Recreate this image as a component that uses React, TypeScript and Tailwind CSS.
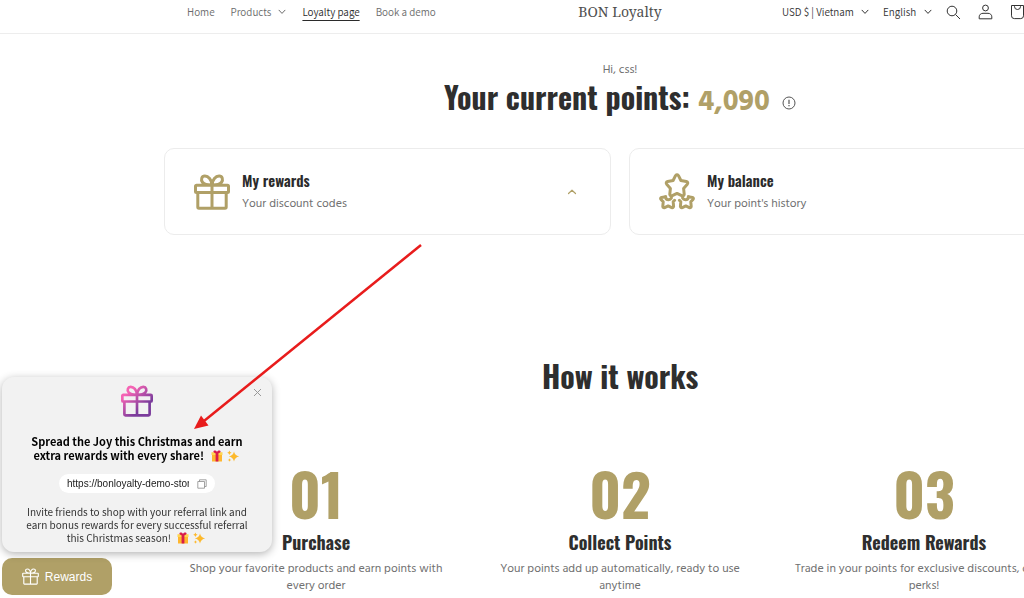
import React, { useState } from "react";

const steps = [
  {
    number: "01",
    title: "Purchase",
    text: "Shop your favorite products and earn points with every order",
  },
  {
    number: "02",
    title: "Collect Points",
    text: "Your points add up automatically, ready to use anytime",
  },
  {
    number: "03",
    title: "Redeem Rewards",
    text: "Trade in your points for exclusive discounts, or VIP perks!",
  },
];

const ChevronDown: React.FC<{ className?: string }> = ({ className }) => (
  <svg viewBox="0 0 8 6" className={`h-[6px] w-2 ${className ?? ""}`} fill="none" stroke="currentColor" aria-hidden="true">
    <path d="M1 1.2 4 4.4 7 1.2" strokeLinecap="round" strokeLinejoin="round" />
  </svg>
);

const GiftIcon: React.FC<{ className: string; stroke?: string; width?: number }> = ({
  className,
  stroke = "currentColor",
  width = 2,
}) => (
  <svg viewBox="0 0 36 36" className={className} fill="none" stroke={stroke} strokeWidth={width} aria-hidden="true">
    <defs>
      <linearGradient id="gift" x1="4" y1="4" x2="30" y2="34" gradientUnits="userSpaceOnUse">
        <stop offset="0.15" stopColor="#f564b4" />
        <stop offset="0.75" stopColor="#7b3c9c" />
      </linearGradient>
    </defs>
    <path
      d="M2.5 11.2h31a1 1 0 0 1 1 1v5.4a1 1 0 0 1-1 1h-31a1 1 0 0 1-1-1v-5.4a1 1 0 0 1 1-1ZM3.8 18.6V33a1.2 1.2 0 0 0 1.2 1.2h26a1.2 1.2 0 0 0 1.2-1.2V18.6M18 11.2v23M18 11C17.6 5.500 14.400 2 10.800 2.100 7.600 2.200 6.600 5.800 8.500 8.200c1.700 2.200 5.200 2.900 9.500 2.800ZM18 11C18.400 5.500 21.600 2 25.200 2.100c3.200.1 4.200 3.700 2.300 6.100-1.700 2.200-5.200 2.900-9.500 2.800Z"
      strokeLinejoin="round"
    />
  </svg>
);

const StarsIcon: React.FC = () => (
  <svg
    viewBox="0 0 36 37"
    className="h-[37px] w-9 shrink-0"
    fill="none"
    stroke="currentColor"
    strokeWidth="3"
    strokeLinejoin="round"
    strokeLinecap="round"
    aria-hidden="true"
  >
    <path d="M16.500 2.700q1.500-1.700 3 0l2.400 4.800 5.400 1q2.300.8 1 2.800l-3.700 4.100.6 5.800q-.3 2.100-2.500 1.500L18 20.400l-4.700 2.300q-2.200.6-2.500-1.500l.6-5.800-3.700-4.100q-1.300-2 1-2.800l5.400-1Z" />
    <path d="M6.600 23.800l-4 .6q-1.600.7-.6 2l2.200 2.400-.4 4.600q.2 1.800 1.900 1.200l3.500-1.700 3.500 1.700q1.700.5 1.900-1.200l-.4-4.600 1.400-1.500" />
    <path d="M6.600 23.800q.2 2.900 2.900 2.900 2-.2 2.900-1.800" />
    <path d="M29.400 23.800l4 .6q1.600.7.6 2l-2.200 2.400.4 4.600q-.2 1.800-1.900 1.200l-3.500-1.700-3.500 1.700q-1.700.5-1.900-1.200l.4-4.600-1.400-1.500" />
    <path d="M29.400 23.800q-.2 2.900-2.900 2.900-2-.2-2.900-1.800" />
  </svg>
);

const FestiveIcons: React.FC = () => (
  <svg viewBox="0 0 30 12" className="ml-1 inline-block h-3 w-[30px] align-[-2px]" role="img" aria-label="Gift and sparkles">
    <path fill="#ffb62e" d="M1 4h10v7.500H1z" />
    <path fill="#ffd54f" d="M.5 2.200h11V5H.5z" />
    <path fill="#d81b4a" d="M4.600 2.500h2.800v9H4.600zM6 3.300C4.500 3.500 2.300 3 2.400 1.600 2.600 0 5.200.3 6 2 6.800.3 9.400 0 9.600 1.600 9.700 3 7.500 3.500 6 3.300Z" />
    <path
      fill="#fdb92c"
      d="M23 1.500q.7 4.100 5.200 4.900-4.500.8-5.200 5.100-.7-4.300-5.200-5.100 4.500-.8 5.200-4.900ZM18.400.5q.3 1.800 2.200 2.200-1.900.4-2.200 2.200-.3-1.800-2.200-2.200 1.900-.4 2.200-2.200ZM18.500 8.300q.2 1.400 1.800 1.700-1.600.3-1.800 1.700-.2-1.400-1.800-1.700 1.600-.3 1.800-1.700Z"
    />
  </svg>
);

const HeaderSelect: React.FC<{ label: string; value: string }> = ({ label, value }) => (
  <label className="grid items-center text-[#333]">
    <span className="sr-only">{label}</span>
    <select className="col-start-1 row-start-1 appearance-none bg-transparent pr-[15px] leading-4 outline-none">
      <option>{value}</option>
    </select>
    <ChevronDown className="pointer-events-none col-start-1 row-start-1 justify-self-end" />
  </label>
);

const Header: React.FC = () => (
  <header className="grid h-[34px] grid-cols-[1fr_auto_1fr] items-center border-b border-[#ededed] px-[187px] pb-[9px] font-['Assistant','Noto_Sans_CJK_JP',sans-serif] text-[11px] leading-4">
    <nav className="flex items-center gap-4 text-[#6b6b6b]">
      <a href="#home">Home</a>
      <button className="flex items-center gap-[7px]">
        Products
        <ChevronDown />
      </button>
      <a href="#loyalty" className="text-[#2b2b2b] underline underline-offset-4">
        Loyalty page
      </a>
      <a href="#demo">Book a demo</a>
    </nav>
    <a href="#home" className="font-['Noto_Serif','DejaVu_Serif_Condensed','DejaVu_Serif',serif] text-sm text-[#505050]">
      BON Loyalty
    </a>
    <div className="mr-7 flex items-center justify-end gap-[14px] text-[#333]">
      <HeaderSelect label="Country" value="USD $ | Vietnam" />
      <HeaderSelect label="Language" value="English" />
      <div className="flex items-center gap-[17px]">
        <button aria-label="Search">
          <svg viewBox="0 0 15 15" className="size-[15px]" fill="none" stroke="currentColor">
            <circle cx="6" cy="6" r="4.800" />
            <path d="m9.500 9.500 4.500 4.500" />
          </svg>
        </button>
        <button aria-label="Account">
          <svg viewBox="0 0 15 16" className="h-4 w-[15px]" fill="none" stroke="currentColor">
            <circle cx="7.500" cy="4" r="2.900" />
            <path d="M1.200 14.800v-2C1.200 10.600 3 9.300 5 9.300h5c2 0 3.800 1.300 3.800 3.500v2Z" strokeLinejoin="round" />
          </svg>
        </button>
        <button aria-label="Cart">
          <svg viewBox="0 0 15 16" className="h-4 w-[15px]" fill="none" stroke="currentColor">
            <path d="M1.500 1.500h12v10.300a2.800 2.800 0 0 1-2.800 2.800H4.300a2.800 2.800 0 0 1-2.800-2.800ZM4.500 1.500v1a3 3 0 0 0 6 0v-1" />
          </svg>
        </button>
      </div>
    </div>
  </header>
);

type CardProps = { icon: React.ReactNode; title: string; text: string };

const AccountCard: React.FC<CardProps> = ({ icon, title, text }) => (
  <button className="flex h-[87px] items-center gap-3 rounded-[10px] border border-[#ececec] pr-[33px] pl-[29px] text-left text-[#b0a067]">
    {icon}
    <span className="flex flex-1 flex-col gap-1">
      <span className="font-['Oswald',sans-serif] text-[15px] leading-5 font-semibold text-[#2b2b2b]">{title}</span>
      <span className="text-xs leading-5 text-[#707070]">{text}</span>
    </span>
    <svg viewBox="0 0 10 6" className="h-[6px] w-[10px]" fill="none" stroke="currentColor" strokeWidth="1.200" aria-hidden="true">
      <path d="M1.500 4.500 5 1.200l3.500 3.300" strokeLinecap="round" strokeLinejoin="round" />
    </svg>
  </button>
);

const ReferralPopup: React.FC<{ onClose: () => void }> = ({ onClose }) => (
  <aside className="relative flex w-[270px] flex-col items-center rounded-xl bg-[#f2f2f2] px-5 pt-2 pb-2 text-center font-['Noto_Sans_CJK_JP',sans-serif] shadow-[0_2px_8px_rgba(0,0,0,0.3)]">
    <button onClick={onClose} aria-label="Close" className="absolute top-[11px] right-[10px]">
      <svg viewBox="0 0 9 9" className="size-[9px]" stroke="#999" fill="none">
        <path d="m1 1 7 7M8 1 1 8" />
      </svg>
    </button>
    <GiftIcon className="h-8 w-8" stroke="url(#gift)" width={3} />
    <h3 className="mt-[17px] text-[11px] leading-[14px] font-bold text-black">
      Spread the Joy this Christmas and earn
      <br />
      extra rewards with every share! <FestiveIcons />
    </h3>
    <div className="mt-3 flex h-[19px] w-[156px] items-center justify-between rounded-full bg-white px-2">
      <input
        readOnly
        aria-label="Referral link"
        value="https://bonloyalty-demo-store.com"
        className="w-[122px] bg-transparent font-['Liberation_Sans',sans-serif] text-[10px] text-[#222] outline-none"
      />
      <button aria-label="Copy link">
        <svg viewBox="0 0 10 10" className="size-[10px]" fill="none" stroke="#8c8c8c" strokeWidth="0.8">
          <path d="M.8 2.500h6.700v6.700H.8ZM2.500 2.500V.8h6.700v6.700H7.500" strokeLinejoin="round" />
        </svg>
      </button>
    </div>
    <p className="mt-3 text-[10px] leading-[13px] text-[#333]">
      Invite friends to shop with your referral link and
      <br />
      earn bonus rewards for every successful referral
      <br />
      this Christmas season! <FestiveIcons />
    </p>
  </aside>
);

const App: React.FC = () => {
  const [showPopup, setShowPopup] = useState<boolean>(true);

  return (
    <div className="relative h-screen overflow-hidden bg-white">
      <div className="min-w-[1240px] font-['Hind','Noto_Sans',sans-serif]">
        <Header />

        <main className="px-[164px] text-center">
          <p className="pt-[26px] text-xs leading-5 text-[#707070]">Hi, css!</p>
          <div className="flex h-9 items-baseline justify-center gap-2">
            <h1 className="font-['Oswald',sans-serif] text-[30px] leading-[34px] font-bold text-[#2e2e2e]">
              Your current points:
            </h1>
            <span className="text-[29px] leading-9 font-bold text-[#b0a067]">4,090</span>
            <button aria-label="About points" className="pl-1">
              <svg viewBox="0 0 14 14" className="size-[14px]" fill="none" stroke="#555">
                <circle cx="7" cy="7" r="6" />
                <path d="M7 3.700v4.400M7 9v1.300" strokeWidth="1.200" />
              </svg>
            </button>
          </div>

          <section className="mt-8 grid grid-cols-2 gap-[18px]">
            <AccountCard icon={<GiftIcon className="size-9 shrink-0" width={3} />} title="My rewards" text="Your discount codes" />
            <AccountCard icon={<StarsIcon />} title="My balance" text="Your point's history" />
          </section>

          <section className="pt-[121px]">
            <h2 className="font-['Oswald',sans-serif] text-[30px] leading-10 font-bold text-[#2e2e2e]">How it works</h2>
            <ol className="mt-[63px] grid grid-cols-3">
              {steps.map((step) => (
                <li key={step.number} className="px-3">
                  <div className="font-['Oswald',sans-serif] text-[58px] leading-[68px] font-bold text-[#b0a067]">
                    {step.number}
                  </div>
                  <h3 className="font-['Oswald',sans-serif] text-lg leading-[30px] font-bold text-[#2e2e2e]">{step.title}</h3>
                  <p className="mt-1 text-xs leading-[17px] text-[#707070]">{step.text}</p>
                </li>
              ))}
            </ol>
          </section>
        </main>
      </div>

      <div className="fixed bottom-[3px] left-[2px] flex flex-col items-start gap-[6px]">
        {showPopup && <ReferralPopup onClose={() => setShowPopup(false)} />}
        <button
          onClick={() => setShowPopup(!showPopup)}
          className="flex h-[37px] w-[110px] items-center justify-center gap-[6px] rounded-[10px] bg-[#b0a067] font-['Liberation_Sans',sans-serif] text-xs text-white"
        >
          <GiftIcon className="size-[17px]" width={2.4} />
          Rewards
        </button>
      </div>

      <svg viewBox="0 0 228 186" className="pointer-events-none absolute top-[244px] left-[194px] h-[186px] w-[228px]" aria-hidden="true">
        <path d="M227 1 10 177" stroke="#e81c1c" strokeWidth="2.500" />
        <path d="M0 185 7 171.500 14.500 181.500Z" fill="#e81c1c" />
      </svg>
    </div>
  );
};

export default App;
